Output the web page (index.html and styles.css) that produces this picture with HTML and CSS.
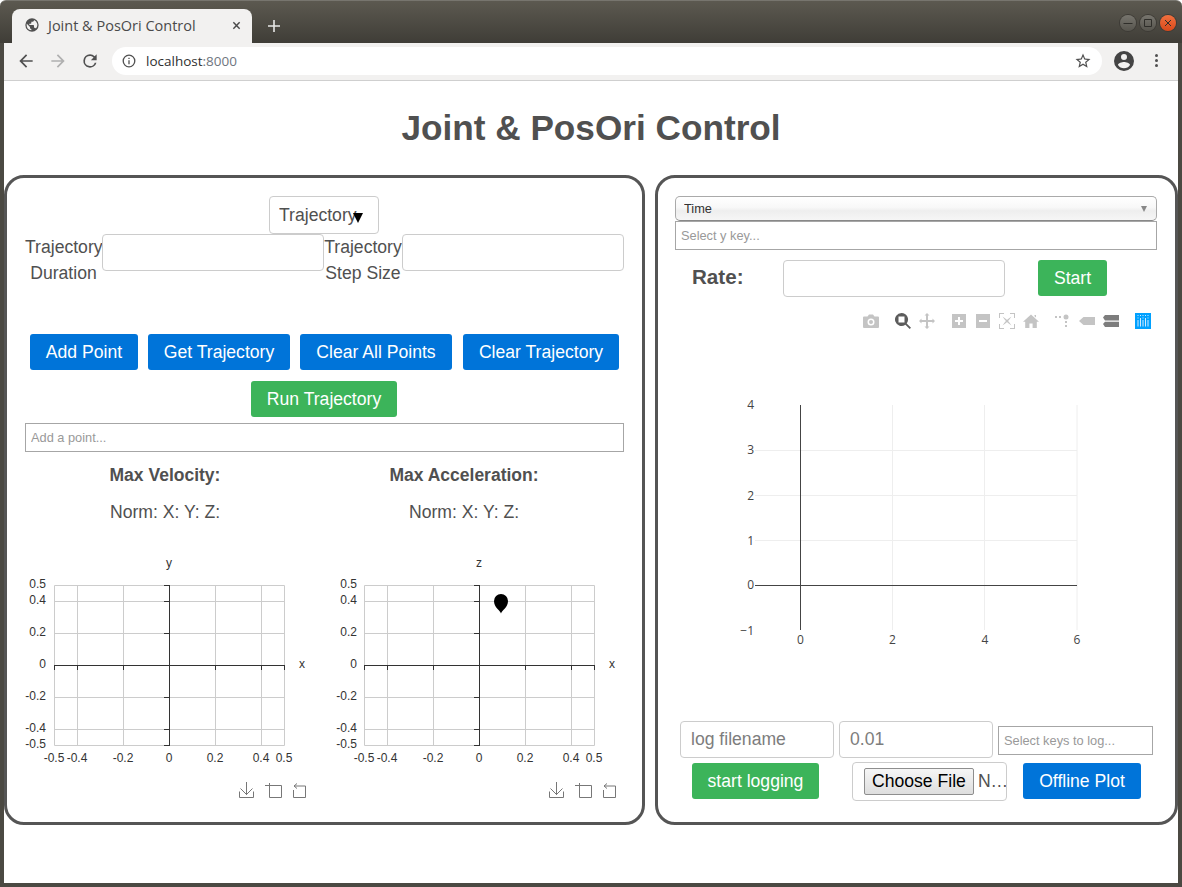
FILE: index.html
```html
<!DOCTYPE html>
<html lang="en">
<head>
  <meta charset="UTF-8">
  <meta name="viewport" content="width=device-width, initial-scale=1.0">
  <title>Joint &amp; PosOri Control</title>
  <link rel="stylesheet" href="styles.css">
</head>
<body>
  <svg class="defs" width="0" height="0">
    <!-- grid shared by the two small plots, page offset 20,550 -->
    <symbol id="smallGrid" viewBox="0 0 310 260">
      <path class="grid" d="M34.5 35.5H264.5V195.5H34.5ZM57.5 35V195M103.5 35V195M195.5 35V195M241.5 35V195M34 51.5H264M34 83.5H264M34 147.5H264M34 179.5H264"/>
      <path class="axis" d="M34 115.5H265M149.5 35V196M34.5 115V120M57.5 115V120M103.5 115V120M195.5 115V120M241.5 115V120M264.5 115V120M144 35.5H149M144 51.5H149M144 83.5H149M144 147.5H149M144 179.5H149M144 195.5H149"/>
      <path class="tool" d="M219.500 241.500v6h14v-6M226.500 232v13M220.500 238.500l6 6 6-6"/>
      <path class="tool" d="M245 235.500h5M249.500 233v5M249.500 235.500H261.500V247.500H249.500Z"/>
      <path class="tool" d="M277 233.500l-3 2.500 3 2.500M274 236H285.500V247.500H273.500V240"/>
    </symbol>
  </svg>

  <div class="window">
    <div class="titlebar">
      <div class="tab">
        <svg class="favicon" viewBox="0 0 24 24"><path d="M12 2a10 10 0 1 0 0 20 10 10 0 0 0 0-20zm-1 17.930A8 8 0 0 1 4 12c0-.62.08-1.210.21-1.790L9 15v1a2 2 0 0 0 2 2zm6.900-2.540A2 2 0 0 0 16 16h-1v-3a1 1 0 0 0-1-1H8v-2h2a1 1 0 0 0 1-1V7h2a2 2 0 0 0 2-2v-.41a8 8 0 0 1 2.900 12.800z"/></svg>
        <span class="tab-title">Joint &amp; PosOri Control</span>
        <svg class="tab-close" viewBox="0 0 10 10"><path d="M1.500 1.500l7 7M8.500 1.500l-7 7"/></svg>
      </div>
      <svg class="new-tab" viewBox="0 0 12 12"><path d="M6 0v12M0 6h12"/></svg>
      <div class="win-buttons">
        <span class="win-btn"><svg viewBox="0 0 16 16"><path d="M3.500 8.500h9"/></svg></span>
        <span class="win-btn"><svg viewBox="0 0 16 16"><path d="M4.500 4.500h7v7h-7z"/></svg></span>
        <span class="win-btn win-close"><svg viewBox="0 0 16 16"><path d="M5 5l6 6M11 5l-6 6"/></svg></span>
      </div>
    </div>

    <div class="frame">
      <div class="toolbar">
        <svg class="nav-icon" viewBox="0 0 24 24"><path d="M20 11H7.830l5.590-5.590L12 4l-8 8 8 8 1.410-1.410L7.830 13H20z"/></svg>
        <svg class="nav-icon nav-off" viewBox="0 0 24 24"><path d="M4 11h12.170l-5.590-5.590L12 4l8 8-8 8-1.410-1.410L16.170 13H4z"/></svg>
        <svg class="nav-icon" viewBox="0 0 24 24"><path d="M17.650 6.350A7.950 7.950 0 0 0 12 4a8 8 0 1 0 7.750 10h-2.080A6 6 0 1 1 12 6c1.660 0 3.140.69 4.220 1.780L13 11h7V4z"/></svg>
        <div class="urlbar">
          <svg class="info" viewBox="0 0 14 14"><circle cx="7" cy="7" r="5.800"/><path d="M7 6.300v4M7 3.700v1.400"/></svg>
          <span class="url">localhost<span class="url-port">:8000</span></span>
          <svg class="star" viewBox="0 0 24 24"><path d="M22 9.240l-7.190-.62L12 2 9.190 8.630 2 9.240l5.460 4.730L5.820 21 12 17.270 18.180 21l-1.630-7.030zM12 15.400l-3.760 2.270 1-4.280-3.320-2.880 4.380-.38L12 6.100l1.710 4.040 4.380.38-3.320 2.880 1 4.280z"/></svg>
        </div>
        <svg class="avatar" viewBox="0 0 24 24"><path d="M12 2a10 10 0 1 0 0 20 10 10 0 0 0 0-20zm0 3a3 3 0 1 1 0 6 3 3 0 0 1 0-6zm0 14.200a7.200 7.200 0 0 1-6-3.220c.03-1.990 4-3.080 6-3.080s5.970 1.090 6 3.080a7.200 7.200 0 0 1-6 3.220z"/></svg>
        <div class="dots"><i></i><i></i><i></i></div>
      </div>

      <div class="page">
        <h1>Joint &amp; PosOri Control</h1>
        <div class="panels">

          <!-- Trajectory panel -->
          <section class="panel panel-left">
            <div class="mode-row">
              <div class="mode-select">
                <select class="mode"><option>Trajectory</option></select>
                <span class="mode-caret"></span>
              </div>
            </div>
            <div class="fields">
              <label class="field-label">Trajectory Duration</label>
              <input class="input field-input" type="text">
              <label class="field-label">Trajectory Step Size</label>
              <input class="input field-input" type="text">
            </div>
            <div class="btn-row">
              <button class="btn btn-blue btn-add">Add Point</button>
              <button class="btn btn-blue btn-get">Get Trajectory</button>
              <button class="btn btn-blue btn-clear-pts">Clear All Points</button>
              <button class="btn btn-blue btn-clear">Clear Trajectory</button>
            </div>
            <div class="run-row">
              <button class="btn btn-green btn-run">Run Trajectory</button>
            </div>
            <input class="select-input add-point" type="text" placeholder="Add a point...">
            <div class="limits">
              <div class="limit">
                <p class="limit-title">Max Velocity:</p>
                <p class="limit-values">Norm: X: Y: Z:</p>
              </div>
              <div class="limit">
                <p class="limit-title">Max Acceleration:</p>
                <p class="limit-values">Norm: X: Y: Z:</p>
              </div>
            </div>
            <div class="small-plots">
              <svg class="small-plot" width="310" height="260" viewBox="0 0 310 260">
                <use href="#smallGrid" width="310" height="260"/>
                <g class="ticks ticks-y">
                  <text x="26" y="38">0.5</text><text x="26" y="54">0.4</text><text x="26" y="86">0.2</text><text x="26" y="118">0</text><text x="26" y="150">-0.2</text><text x="26" y="182">-0.4</text><text x="26" y="198">-0.5</text>
                </g>
                <g class="ticks ticks-x">
                  <text x="34" y="212">-0.5</text><text x="57" y="212">-0.4</text><text x="103" y="212">-0.2</text><text x="149" y="212">0</text><text x="195" y="212">0.2</text><text x="241" y="212">0.4</text><text x="264" y="212">0.5</text>
                </g>
                <text class="axis-name" x="149" y="17">y</text>
                <text class="axis-name" x="282" y="118">x</text>
              </svg>
              <svg class="small-plot" width="310" height="260" viewBox="0 0 310 260">
                <use href="#smallGrid" width="310" height="260"/>
                <g class="ticks ticks-y">
                  <text x="27" y="38">0.5</text><text x="27" y="54">0.4</text><text x="27" y="86">0.2</text><text x="27" y="118">0</text><text x="27" y="150">-0.2</text><text x="27" y="182">-0.4</text><text x="27" y="198">-0.5</text>
                </g>
                <g class="ticks ticks-x">
                  <text x="34" y="212">-0.5</text><text x="57" y="212">-0.4</text><text x="103" y="212">-0.2</text><text x="149" y="212">0</text><text x="195" y="212">0.2</text><text x="241" y="212">0.4</text><text x="264" y="212">0.5</text>
                </g>
                <text class="axis-name" x="149" y="17">z</text>
                <text class="axis-name" x="282" y="118">x</text>
                <path class="pin" d="M171 63.500c-1-3.500-7-6-7-12.500a7 7 0 0 1 14 0c0 6.500-6 9-7 12.500z"/>
              </svg>
            </div>
          </section>

          <!-- Plot panel -->
          <section class="panel panel-right">
            <div class="time-select">
              <select class="time"><option>Time</option></select>
              <span class="time-caret"></span>
            </div>
            <input class="select-input y-key" type="text" placeholder="Select y key...">
            <div class="rate-row">
              <label class="rate-label">Rate:</label>
              <input class="input rate-input" type="text">
              <button class="btn btn-green btn-start">Start</button>
            </div>

            <div class="modebar">
              <div class="mode-group">
                <svg class="mb" viewBox="0 0 16 16"><path fill-rule="evenodd" d="M1 3.500h3.500L6 1.500h4l1.500 2H15a1 1 0 0 1 1 1V14a1 1 0 0 1-1 1H1a1 1 0 0 1-1-1V4.500a1 1 0 0 1 1-1zM8 5.500a3.500 3.500 0 1 0 0 7 3.500 3.500 0 0 0 0-7zM8 7a2 2 0 1 1 0 4 2 2 0 0 1 0-4z"/></svg>
              </div>
              <div class="mode-group">
                <svg class="mb mb-active" viewBox="0 0 16 16"><path fill-rule="evenodd" d="M6.500 0a6.500 6.500 0 0 1 5.200 10.400l4.300 4.300-1.300 1.300-4.300-4.300A6.500 6.500 0 1 1 6.500 0zM3.500 3.500v6h6v-6z"/></svg>
                <svg class="mb" viewBox="0 0 16 16"><path d="M8 0l2.500 2.500H9V7h4.500V5.500L16 8l-2.500 2.500V9H9v4.500h1.500L8 16l-2.500-2.500H7V9H2.500v1.500L0 8l2.500-2.500V7H7V2.500H5.500z"/></svg>
              </div>
              <div class="mode-group">
                <svg class="mb" viewBox="0 0 16 16"><path fill-rule="evenodd" d="M1 1h14v14H1zM7 4v3H4v2h3v3h2V9h3V7H9V4z"/></svg>
                <svg class="mb" viewBox="0 0 16 16"><path fill-rule="evenodd" d="M1 1h14v14H1zM4 7v2h8V7z"/></svg>
                <svg class="mb" viewBox="0 0 16 16"><path fill-rule="evenodd" d="M0 0h5v1H1v4H0zM11 0h5v5h-1V1h-4zM0 11h1v4h4v1H0zM15 11h1v5h-5v-1h4zM3.500 3.500L7 6 8 7l1-1 3.500-2.500L10 7l-1 1 1 1 2.500 3.500L9 10 8 9l-1 1-3.500 2.500L6 9l1-1-1-1z"/></svg>
                <svg class="mb" viewBox="0 0 16 16"><path d="M8 1.500l8 7.200h-2.200V15H9.600v-4.500H6.400V15H2.200V8.700H0zM11.500 2H13v2.500l-1.500-1.300z"/></svg>
              </div>
              <div class="mode-group">
                <svg class="mb" viewBox="0 0 16 16"><circle cx="11" cy="4" r="2.500"/><path d="M0 3h2v2H0zM4 3h2v2H4zM10 8h2v2h-2zM10 12h2v2h-2z"/></svg>
                <svg class="mb" viewBox="0 0 16 16"><path d="M0 8l4.500-4H16v8H4.500z"/></svg>
                <svg class="mb mb-compare" viewBox="0 0 16 16"><path d="M0 4.500L2 2h14v5.500H2zM0 11L2 8.800h14V14H2z"/></svg>
              </div>
              <div class="mode-group">
                <svg class="mb mb-logo" viewBox="0 0 16 16"><path d="M0 0h16v16H0z"/><path class="logo-marks" d="M2.500 2h1v1h-1zM5 2h1v1H5zM7.500 2h1v1h-1zM10 2h1v1h-1zM12.500 2h1v1h-1zM2.500 4.500h1v1h-1zM7.500 4.500h1v1h-1zM12.500 4.500h1v1h-1zM2.500 7h1v6.500h-1zM5 5h1v8.500H5zM7.500 7h1v6.500h-1zM10 5h1v8.500h-1zM12.500 7h1v6.500h-1z"/></svg>
              </div>
            </div>

            <svg class="main-plot" width="482" height="392" viewBox="0 0 482 392">
              <path class="main-grid" d="M217.500 76V301M309.500 76V301M402 76V301M80 121.500H402M80 166.500H402M80 211.500H402"/>
              <path class="main-axis" d="M125.500 76V301M80 256.500H402"/>
              <g class="main-ticks main-ticks-y">
                <text x="79" y="80">4</text><text x="79" y="125">3</text><text x="79" y="171">2</text><text x="79" y="216">1</text><text x="79" y="260">0</text><text x="79" y="306">−1</text>
              </g>
              <g class="main-ticks main-ticks-x">
                <text x="125.500" y="315">0</text><text x="217.500" y="315">2</text><text x="310" y="315">4</text><text x="402" y="315">6</text>
              </g>
            </svg>

            <div class="log-row">
              <input class="input log-input" type="text" placeholder="log filename">
              <input class="input log-input" type="text" placeholder="0.01">
              <input class="select-input log-keys" type="text" placeholder="Select keys to log...">
            </div>
            <div class="action-row">
              <button class="btn btn-green btn-log">start logging</button>
              <div class="file-box"><input class="file" type="file"></div>
              <button class="btn btn-blue btn-offline">Offline Plot</button>
            </div>
          </section>
        </div>
      </div>
    </div>
  </div>
</body>
</html>
```

FILE: styles.css
```css
* {
  box-sizing: border-box;
}
body {
  margin: 0;
  font-family: "Liberation Sans", Arial, sans-serif;
  color: #505050;
  background: #fff;
}
.defs {
  display: block;
  height: 0;
}

/* browser window */
.window {
  display: flex;
  flex-direction: column;
  width: 1182px;
  height: 887px;
  overflow: hidden;
}
.titlebar {
  display: flex;
  align-items: flex-end;
  flex: 0 0 43px;
  padding-left: 12px;
  background: linear-gradient(#5c5950, #3f3d37);
  border-top: 1px solid #77756e;
  border-radius: 6px 6px 0 0;
}
.tab {
  position: relative;
  display: flex;
  align-items: center;
  width: 240px;
  height: 34px;
  padding: 0 11px 2px 12px;
  background: #f2f1f0;
  border-radius: 8px 8px 0 0;
}
.favicon {
  width: 16px;
  height: 16px;
  fill: #505050;
}
.tab-title {
  margin-left: 8px;
  flex: 1;
  font: 14.500px "Open Sans", sans-serif;
  color: #4a4a4a;
  white-space: nowrap;
}
.tab-close {
  width: 9px;
  height: 9px;
  fill: none;
  stroke: #4a4a4a;
  stroke-width: 1.600;
}
.new-tab {
  width: 12px;
  height: 12px;
  margin: 0 0 11px 16px;
  fill: none;
  stroke: #e8e8e6;
  stroke-width: 1.600;
}
.win-buttons {
  display: flex;
  gap: 4px;
  margin: 0 6px 12px auto;
}
.win-btn {
  display: block;
  width: 16px;
  height: 16px;
  border-radius: 50%;
  background: linear-gradient(#77756e, #56544d);
  box-shadow: 0 0 0 1px #3d3b36;
}
.win-btn svg {
  display: block;
  fill: none;
  stroke: #2f2e2a;
  stroke-width: 1;
}
.win-close {
  background: linear-gradient(#f0703f, #d9481a);
}
.frame {
  flex: 1;
  display: flex;
  flex-direction: column;
  border: 4px solid #4b4942;
  border-top: 0;
}

/* toolbar */
.toolbar {
  display: flex;
  align-items: center;
  flex: 0 0 38px;
  padding: 0 12px 2px 12px;
  background: #f2f1f0;
  border-bottom: 1px solid #cfcfcf;
}
.nav-icon {
  width: 20px;
  height: 20px;
  margin-right: 12px;
  fill: #505050;
}
.nav-off {
  fill: #b0b0b0;
}
.urlbar {
  display: flex;
  align-items: center;
  width: 990px;
  height: 28px;
  padding: 0 10px;
  background: #fff;
  border-radius: 14px;
}
.info {
  width: 14px;
  height: 14px;
  fill: none;
  stroke: #505050;
  stroke-width: 1.300;
}
.url {
  margin-left: 10px;
  font: 13.500px "Open Sans", sans-serif;
  color: #303030;
}
.url-port {
  color: #6f7680;
}
.star {
  width: 18px;
  height: 18px;
  margin-left: auto;
  fill: #505050;
}
.avatar {
  width: 24px;
  height: 24px;
  margin-left: 10px;
  fill: #444;
}
.dots {
  display: flex;
  flex-direction: column;
  gap: 2px;
  margin-left: 19px;
}
.dots i {
  display: block;
  width: 3px;
  height: 3px;
  border-radius: 50%;
  background: #505050;
}

/* page */
.page {
  flex: 1;
  background: #fff;
}
h1 {
  height: 94px;
  margin: 0;
  padding-top: 26px;
  font-size: 35.200px;
  line-height: 42px;
  font-weight: bold;
  text-align: center;
  color: #505050;
}
.panels {
  display: grid;
  grid-template-columns: 641px 523px;
  gap: 10px;
}
.panel {
  height: 650px;
  border: 3px solid #555;
  border-radius: 20px;
  padding-top: 18px;
}
.panel-left {
  padding-left: 18px;
  padding-right: 18px;
}
.panel-right {
  padding-left: 17px;
  padding-right: 18px;
}

/* form controls */
.input {
  height: 37px;
  padding: 0 10px;
  font-family: inherit;
  font-size: 17.600px;
  color: #505050;
  background: #fff;
  border: 1px solid #ccc;
  border-radius: 4px;
  outline: none;
}
.input::placeholder {
  color: #7d7d7d;
  opacity: 1;
}
.select-input {
  display: block;
  padding: 0 5px;
  font-family: inherit;
  font-size: 12.800px;
  color: #333;
  background: #fff;
  border: 1px solid #a6a6a6;
  border-radius: 0;
  outline: none;
}
.select-input::placeholder {
  color: #999;
  opacity: 1;
}
.btn {
  height: 36px;
  padding: 0;
  font-family: inherit;
  font-size: 17.600px;
  color: #fff;
  border: none;
  border-radius: 3px;
  cursor: pointer;
}
.btn-blue {
  background: #0074d9;
}
.btn-green {
  background: #3cb45a;
}

/* left panel */
.mode-row {
  display: flex;
  justify-content: center;
  padding-right: 1px;
}
.mode-select {
  position: relative;
  width: 110px;
  height: 38px;
}
.mode {
  display: block;
  width: 100%;
  height: 100%;
  padding: 0 0 0 9px;
  font-family: inherit;
  font-size: 17.600px;
  color: #505050;
  background: #fff;
  border: 1px solid #ccc;
  border-radius: 4px;
  appearance: none;
}
.mode-caret {
  position: absolute;
  left: 84px;
  top: 17px;
  border-style: solid;
  border-width: 10px 5px 0;
  border-color: #000 transparent transparent;
}
.fields {
  display: grid;
  grid-template-columns: 77px 222px 78px 222px;
  align-items: start;
  height: 100px;
}
.field-label {
  font-size: 17.600px;
  line-height: 26px;
  text-align: center;
}
.field-input {
  width: 100%;
}
.btn-row {
  display: flex;
  gap: 10px;
  padding-left: 5px;
}
.btn-add { width: 108px; }
.btn-get { width: 142px; }
.btn-clear-pts { width: 152px; }
.btn-clear { width: 156px; margin-left: 1px; }
.run-row {
  display: flex;
  justify-content: center;
  margin-top: 11px;
  padding-right: 1px;
}
.btn-run { width: 146px; }
.add-point {
  width: 599px;
  height: 29px;
  margin-top: 6px;
}
.limits {
  display: grid;
  grid-template-columns: 278px 278px;
  gap: 21px;
  margin-top: 10px;
  padding-left: 1px;
}
.limit {
  text-align: center;
  font-size: 17.600px;
  line-height: 26px;
}
.limit p {
  margin: 0;
}
.limit-title {
  font-size: 17.500px;
  font-weight: bold;
}
.limit-values {
  padding-top: 11px;
}
.small-plots {
  display: flex;
  margin: 25px 0 0 -5px;
}
.small-plot {
  flex: 0 0 310px;
  display: block;
}
.grid {
  fill: none;
  stroke: #ccc;
}
.axis {
  fill: none;
  stroke: #333;
}
.tool {
  fill: none;
  stroke: #777;
}
.ticks text {
  font-size: 12px;
  fill: #333;
}
.ticks-y text {
  text-anchor: end;
}
.ticks-x text,
.axis-name {
  text-anchor: middle;
}
.axis-name {
  font-size: 12px;
  fill: #333;
}
.pin {
  fill: #000;
}

/* right panel */
.time-select {
  position: relative;
  height: 25px;
}
.time {
  display: block;
  width: 100%;
  height: 100%;
  padding: 0 0 0 8px;
  font-family: inherit;
  font-size: 12.800px;
  color: #333;
  background: linear-gradient(#fff 0%, #f8f8f8 45%, #eee 60%, #f6f6f6 100%);
  border: 1px solid #aaa;
  border-bottom-color: #888;
  border-radius: 5px;
  appearance: none;
}
.time-caret {
  position: absolute;
  right: 10px;
  top: 10px;
  border-style: solid;
  border-width: 6px 3.500px 0;
  border-color: #888 transparent transparent;
}
.y-key {
  width: 100%;
  height: 29px;
}
.rate-row {
  display: flex;
  align-items: flex-start;
  margin-top: 10px;
  padding-left: 17px;
}
.rate-label {
  width: 91px;
  font-size: 20.600px;
  font-weight: bold;
  line-height: 34px;
}
.rate-input {
  width: 222px;
}
.btn-start {
  width: 69px;
  margin-left: 33px;
}
.modebar {
  display: flex;
  justify-content: flex-end;
  gap: 16px;
  height: 16px;
  margin-top: 16px;
  padding-right: 6px;
}
.mode-group {
  display: flex;
  gap: 8px;
}
.mb {
  width: 16px;
  height: 16px;
  fill: #c4c4c4;
}
.mb-active {
  fill: #5c5c5c;
}
.mb-compare {
  fill: #7d7d7d;
}
.mb-logo {
  fill: #00a1ff;
}
.logo-marks {
  fill: #cfeaff;
}
.main-plot {
  display: block;
}
.main-grid {
  fill: none;
  stroke: #eee;
}
.main-axis {
  fill: none;
  stroke: #444;
}
.main-ticks text {
  font: 12px "Open Sans", sans-serif;
  fill: #444;
}
.main-ticks-y text {
  text-anchor: end;
}
.main-ticks-x text {
  text-anchor: middle;
}
.log-row {
  display: flex;
  align-items: flex-start;
  gap: 5px;
  padding-left: 5px;
}
.log-input {
  width: 154px;
}
.log-keys {
  width: 155px;
  height: 29px;
  margin-top: 5px;
}
.action-row {
  display: flex;
  align-items: flex-start;
  margin-top: 4px;
  padding-left: 17px;
}
.btn-log {
  width: 127px;
  margin-top: 1px;
}
.file-box {
  width: 155px;
  height: 39px;
  margin-left: 33px;
  padding: 5px 0 0 11px;
  border: 1px solid #ccc;
  border-radius: 4px;
  overflow: hidden;
}
.file {
  width: 143px;
  font-family: inherit;
  font-size: 17.600px;
  color: #505050;
}
.file::file-selector-button {
  height: 27px;
  margin-right: 4px;
  padding: 0 7px;
  font-family: inherit;
  font-size: 17.600px;
  color: #000;
  background: linear-gradient(#f6f6f6, #dedede);
  border: 1px solid #8e8e8e;
  border-radius: 2px;
}
.btn-offline {
  width: 118px;
  margin: 1px 0 0 16px;
}
```
